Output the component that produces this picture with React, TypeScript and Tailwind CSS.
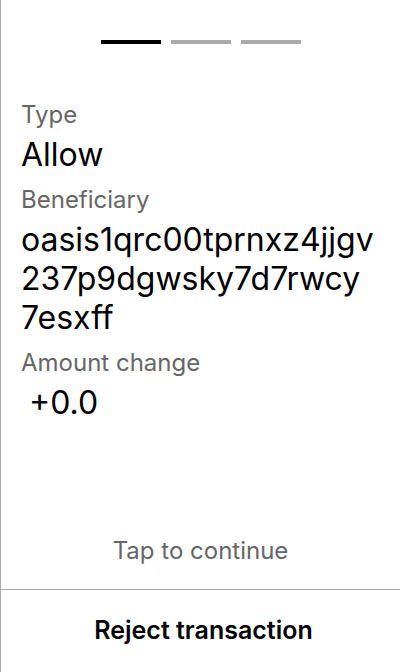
const steps = [true, false, false];

function Field({ label, value, indent = false }: { label: string; value: string; indent?: boolean }) {
  return (
    <div className="flex flex-col gap-[6px]">
      <div className="text-[24px] leading-[29px] text-[#666]">{label}</div>
      <div className={`text-[32px] leading-[39px] text-black break-all ${indent ? "pl-2" : ""}`}>{value}</div>
    </div>
  );
}

export default function App() {
  return (
    <div className="flex h-[672px] w-[400px] flex-col border-l border-[#aaa] bg-white font-['Inter',sans-serif]">
      {/* progress */}
      <div className="flex justify-center gap-[10px] pt-10">
        {steps.map((active, i) => (
          <div key={i} className={`h-1 w-[60px] ${active ? "bg-black" : "bg-[#aaa]"}`} />
        ))}
      </div>

      {/* details */}
      <div className="flex flex-1 flex-col gap-[11px] pt-[56px] pr-6 pl-5">
        <Field label="Type" value="Allow" />
        <Field label="Beneficiary" value="oasis1qrc00tprnxz4jjgv237p9dgwsky7d7rwcy7esxff" />
        <Field label="Amount change" value="+0.0" indent />
      </div>

      <div className="pb-6 text-center text-[24px] leading-[28px] text-[#666]">Tap to continue</div>

      <button className="h-[83px] border-t border-[#aaa] pl-1.5 text-[25px] font-semibold text-black">
        Reject transaction
      </button>
    </div>
  );
}
